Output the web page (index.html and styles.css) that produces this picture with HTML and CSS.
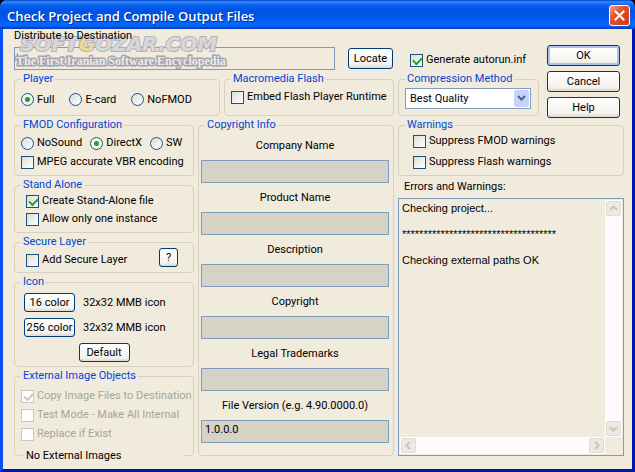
FILE: index.html
```html
<!DOCTYPE html>
<html lang="en">
<head>
    <meta charset="UTF-8">
    <meta name="viewport" content="width=device-width, initial-scale=1.0">
    <title>Check Project and Compile Output Files</title>
    <link rel="stylesheet" href="styles.css">
</head>
<body>
    <div class="window">
        <header class="title-bar">
            <h1>Check Project and Compile Output Files</h1>
            <button class="close" aria-label="Close">
                <svg width="13" height="13" viewBox="0 0 13 13"><path d="M2.500 2.500l8 8M10.500 2.500l-8 8" stroke="#fff" stroke-width="2" stroke-linecap="square"/></svg>
            </button>
        </header>

        <form class="client" onsubmit="return false">
            <div class="watermark" aria-hidden="true">
                <div class="mark-name">SOFT<span class="gold">G</span>OZAR.COM</div>
                <div class="mark-line">The First Iranian Software Encyclopedia</div>
            </div>

            <section class="top-left">
                <label class="dest-label" for="dest">Distribute to Destination</label>
                <div class="dest-row">
                    <input type="text" class="field dest" id="dest">
                    <button type="button" class="btn locate">Locate</button>
                </div>
                <div class="top-groups">
                    <fieldset class="player">
                        <legend>Player</legend>
                        <label><input type="radio" name="player" checked>Full</label>
                        <label><input type="radio" name="player">E-card</label>
                        <label><input type="radio" name="player">NoFMOD</label>
                    </fieldset>
                    <fieldset class="flash">
                        <legend>Macromedia Flash</legend>
                        <label><input type="checkbox">Embed Flash Player Runtime</label>
                    </fieldset>
                </div>
            </section>

            <section class="top-right">
                <div class="output">
                    <label class="autorun"><input type="checkbox" checked>Generate autorun.inf</label>
                    <fieldset class="compression">
                        <legend>Compression Method</legend>
                        <div class="select-box">
                            <select aria-label="Compression Method">
                                <option>Best Quality</option>
                            </select>
                            <svg class="arrow" width="15" height="17" viewBox="0 0 15 17"><path d="M4 6l3.500 3.500L11 6" fill="none" stroke="#4d6185" stroke-width="2"/></svg>
                        </div>
                    </fieldset>
                </div>
                <div class="actions">
                    <button type="button" class="btn primary">OK</button>
                    <button type="button" class="btn">Cancel</button>
                    <button type="button" class="btn">Help</button>
                </div>
            </section>

            <section class="options">
                <fieldset class="fmod">
                    <legend>FMOD Configuration</legend>
                    <div class="row">
                        <label><input type="radio" name="fmod">NoSound</label>
                        <label><input type="radio" name="fmod" checked>DirectX</label>
                        <label><input type="radio" name="fmod">SW</label>
                    </div>
                    <label><input type="checkbox">MPEG accurate VBR encoding</label>
                </fieldset>
                <fieldset class="stand-alone">
                    <legend>Stand Alone</legend>
                    <label><input type="checkbox" checked>Create Stand-Alone file</label>
                    <label><input type="checkbox">Allow only one instance</label>
                </fieldset>
                <fieldset class="secure">
                    <legend>Secure Layer</legend>
                    <label><input type="checkbox">Add Secure Layer</label>
                    <button type="button" class="btn help">?</button>
                </fieldset>
                <fieldset class="icons">
                    <legend>Icon</legend>
                    <div class="row"><button type="button" class="btn">16 color</button><span>32x32 MMB icon</span></div>
                    <div class="row"><button type="button" class="btn">256 color</button><span>32x32 MMB icon</span></div>
                    <button type="button" class="btn default">Default</button>
                </fieldset>
                <fieldset class="external">
                    <legend>External Image Objects</legend>
                    <label class="off"><input type="checkbox" checked disabled>Copy Image Files to Destination</label>
                    <label class="off"><input type="checkbox" disabled>Test Mode - Make All Internal</label>
                    <label class="off"><input type="checkbox" disabled>Replace if Exist</label>
                    <p class="status">No External Images</p>
                </fieldset>
            </section>

            <fieldset class="copyright">
                <legend>Copyright Info</legend>
                <label for="company">Company Name</label>
                <input type="text" class="field" id="company">
                <label for="product">Product Name</label>
                <input type="text" class="field" id="product">
                <label for="description">Description</label>
                <input type="text" class="field" id="description">
                <label for="copyright">Copyright</label>
                <input type="text" class="field" id="copyright">
                <label for="trademarks">Legal Trademarks</label>
                <input type="text" class="field" id="trademarks">
                <label for="version">File Version (e.g. 4.90.0000.0)</label>
                <input type="text" class="field" id="version" value="1.0.0.0">
            </fieldset>

            <section class="report">
                <fieldset class="warnings">
                    <legend>Warnings</legend>
                    <label><input type="checkbox">Suppress FMOD warnings</label>
                    <label><input type="checkbox">Suppress Flash warnings</label>
                </fieldset>
                <label class="log-label" for="log">Errors and Warnings:</label>
                <div class="log-box">
                    <textarea id="log" readonly>Checking project...

************************************

Checking external paths OK</textarea>
                    <div class="scroll vertical">
                        <button type="button" aria-label="Scroll up"><svg width="9" height="9" viewBox="0 0 9 9"><path d="M1 6l3.500-3.500L8 6"/></svg></button>
                        <button type="button" aria-label="Scroll down"><svg width="9" height="9" viewBox="0 0 9 9"><path d="M1 3l3.500 3.500L8 3"/></svg></button>
                    </div>
                    <div class="scroll horizontal">
                        <button type="button" aria-label="Scroll left"><svg width="9" height="9" viewBox="0 0 9 9"><path d="M6 1L2.500 4.500L6 8"/></svg></button>
                        <button type="button" aria-label="Scroll right"><svg width="9" height="9" viewBox="0 0 9 9"><path d="M3 1l3.500 3.500L3 8"/></svg></button>
                    </div>
                </div>
            </section>
        </form>
    </div>
</body>
</html>
```
FILE: styles.css
```css
* {
    box-sizing: border-box;
}

body {
    margin: 0;
    background: #000;
    font-family: Roboto, "Liberation Sans", sans-serif;
    font-size: 11px;
    line-height: 14px;
    color: #000;
}

button, input, select, textarea {
    font: inherit;
    color: inherit;
    margin: 0;
}

.window {
    min-height: 100vh;
    display: flex;
    flex-direction: column;
    border: 3px solid #0a3fe0;
    border-top: none;
    border-color: #0a3fe0 #0018a8 #0018a8 #0a4ff0;
    border-radius: 7px 7px 0 0;
    background: #f1ebdd;
}

.title-bar {
    height: 29px;
    margin: 0 -3px;
    padding: 2px 5px 0 7px;
    display: flex;
    align-items: center;
    justify-content: space-between;
    border-radius: 7px 7px 0 0;
    background: linear-gradient(#0842c8 0, #2f8bff 2px, #0a60f0 5px, #0054e3 10px, #0057ea 18px, #0468ff 24px, #0560f8 26px, #0038b8 29px);
}

.title-bar h1 {
    margin: 0;
    font-family: "Open Sans", "Noto Sans", sans-serif;
    font-size: 13px;
    font-weight: 600;
    color: #fff;
    text-shadow: 1px 1px #0a2a8c;
    white-space: nowrap;
}

.close {
    width: 21px;
    height: 21px;
    padding: 0;
    display: flex;
    align-items: center;
    justify-content: center;
    border: 1px solid #fff;
    border-radius: 3px;
    background: linear-gradient(135deg, #f0a088, #e0502c 40%, #c83c14);
}

.client {
    position: relative;
    flex: 1;
    padding: 0 8px 13px 11px;
    display: grid;
    grid-template-columns: 180fr 196fr 226fr;
    grid-template-rows: auto 1fr;
    gap: 0 4px;
}

/* groups */
fieldset {
    --pad: 6px;
    min-width: 0;
    margin: 0;
    padding: 0 0 0 var(--pad);
    border: 1px solid #d5d0c0;
    border-radius: 4px;
    white-space: nowrap;
}

legend {
    margin-left: calc(6px - var(--pad));
    padding: 0 2px;
    color: #0046d5;
}

label {
    display: flex;
    align-items: center;
    gap: 3px;
}

.row {
    display: flex;
    align-items: center;
}

/* controls */
input[type="checkbox"], input[type="radio"] {
    appearance: none;
    flex: none;
    width: 13px;
    height: 13px;
    border: 1px solid #1c5180;
    background: linear-gradient(135deg, #dcdcd7, #fff);
}

input[type="radio"] {
    border-radius: 50%;
}

input[type="radio"]:checked {
    background: radial-gradient(circle, #21a121 0, #21a121 2px, #f4f4f2 3px);
}

input[type="checkbox"]:checked::before {
    content: "";
    display: block;
    width: 7px;
    height: 4px;
    margin: 2px;
    border: solid #21a121;
    border-width: 0 0 2px 2px;
    transform: rotate(-45deg);
}

input[type="checkbox"]:disabled {
    border-color: #cac8bb;
    background: #fff;
}

input[type="checkbox"]:disabled::before {
    border-color: #cac8bb;
}

.off {
    color: #a7a695;
}

.field {
    width: 100%;
    height: 23px;
    padding: 0 3px 4px;
    border: 1px solid #7f9db9;
    background: #d6d2c6;
}

.btn {
    height: 21px;
    padding: 0;
    border: 1px solid #003c74;
    border-radius: 3px;
    background: linear-gradient(#fff, #f4f3ee 80%, #dcd8cc);
}

.primary {
    box-shadow: inset 0 0 0 2px #a9c4f2;
}

/* destination */
.top-left {
    grid-column: span 2;
}

.dest-label {
    position: relative;
    z-index: 1;
    height: 18px;
    align-items: flex-start;
}

.dest-row {
    display: flex;
    align-items: center;
    gap: 13px;
    padding-right: 1px;
}

.dest {
    flex: 1;
    background: linear-gradient(#d8783c, #d8783c) 2px 5px / 1px 11px no-repeat;
}

.locate {
    width: 45px;
}

.top-groups {
    display: grid;
    grid-template-columns: 206fr 170fr;
    gap: 4px;
    margin-top: 2px;
}

.player {
    height: 44px;
    padding-bottom: 2px;
    display: flex;
    align-items: center;
    gap: 15px;
}

.flash label {
    margin-top: 4px;
}

.top-right {
    display: grid;
    grid-template-columns: 141fr 73fr;
    gap: 8px;
    padding-right: 4px;
}

.autorun {
    margin: 24px 0 5px 12px;
    white-space: nowrap;
}

.compression {
    height: 44px;
    padding: 2px 6px 0;
}

.select-box {
    position: relative;
    display: flex;
    width: 126px;
}

.select-box select {
    appearance: none;
    width: 100%;
    height: 21px;
    padding: 0 4px;
    border: 1px solid #7f9db9;
    border-radius: 0;
    background: #fff;
}

.arrow {
    position: absolute;
    top: 2px;
    right: 2px;
    border-radius: 2px;
    background: #c3d3fb;
    pointer-events: none;
}

.actions {
    display: flex;
    flex-direction: column;
    gap: 5px;
    padding-top: 16px;
}

/* left column */
.options {
    display: flex;
    flex-direction: column;
    gap: 2px;
}

.fmod {
    height: 58px;
}

.fmod .row {
    gap: 8px;
    margin: 4px 0 5px;
}

.stand-alone {
    --pad: 11px;
    height: 55px;
    padding-top: 2px;
}

.stand-alone label + label {
    margin-top: 4px;
}

.secure {
    --pad: 11px;
    height: 38px;
    padding-top: 1px;
    padding-right: 15px;
    display: flex;
    justify-content: space-between;
    align-items: flex-start;
}

.secure label {
    margin-top: 3px;
}

.help {
    width: 19px;
    height: 19px;
    margin-top: -2px;
}

.icons {
    --pad: 9px;
    height: 92px;
    padding-top: 4px;
    padding-right: 9px;
}

.icons .row {
    gap: 8px;
    margin-bottom: 6px;
}

.icons .btn {
    width: 51px;
    height: 19px;
}

.icons .default {
    display: block;
    margin: 0 auto;
}

.external {
    height: 87px;
    padding-top: 1px;
}

.external label {
    margin-top: 5px;
}

.status {
    width: 160px;
    margin: 8px 0 0 2px;
    padding-left: 3px;
    background: #f1ebdd;
}

/* middle column */
.copyright {
    --pad: 2px;
    padding-top: 7px;
    padding-right: 4px;
}

.copyright label {
    justify-content: center;
    margin-bottom: 7px;
}

.copyright .field + label {
    margin-top: 8px;
}

/* right column */
.report {
    display: flex;
    flex-direction: column;
}

.warnings {
    --pad: 14px;
    height: 58px;
    padding-top: 2px;
}

.warnings label + label {
    margin-top: 7px;
}

.log-label {
    margin: 4px 0 4px 6px;
}

.log-box {
    flex: 1;
    display: grid;
    grid-template-columns: 1fr 17px;
    grid-template-rows: 1fr 17px;
    padding: 1px;
    border: 1px solid #7f9db9;
}

.log-box textarea {
    width: 100%;
    height: 100%;
    padding: 2px;
    border: none;
    outline: none;
    resize: none;
    overflow: hidden;
    background: transparent;
    font-family: "Liberation Sans", Arial, sans-serif;
    line-height: 13px;
}

.scroll {
    display: flex;
    justify-content: space-between;
    background: #fdfbfb;
}

.vertical {
    flex-direction: column;
}

.scroll button {
    width: 17px;
    height: 17px;
    padding: 0;
    display: flex;
    align-items: center;
    justify-content: center;
    border: 1px solid #fff;
    border-radius: 3px;
    background: #ebe9e2;
    box-shadow: inset 0 0 0 1px #dedbd2;
}

.scroll path {
    fill: none;
    stroke: #c9c7ba;
    stroke-width: 2;
}

/* logo lying over the destination field */
.watermark {
    position: absolute;
    top: 6px;
    left: 13px;
    color: #d9d7d8;
    pointer-events: none;
    white-space: nowrap;
}

.mark-name {
    font: italic bold 20px/18px "DejaVu Sans", sans-serif;
    -webkit-text-stroke: 2px #b0b2be;
    paint-order: stroke;
    margin-left: 4px;
}

.gold {
    color: #f0d890;
}

.mark-line {
    font: bold 12px/16px "Liberation Serif", serif;
    color: #efebe4;
    -webkit-text-stroke: 3px #a4a6b2;
    paint-order: stroke;
}
```
